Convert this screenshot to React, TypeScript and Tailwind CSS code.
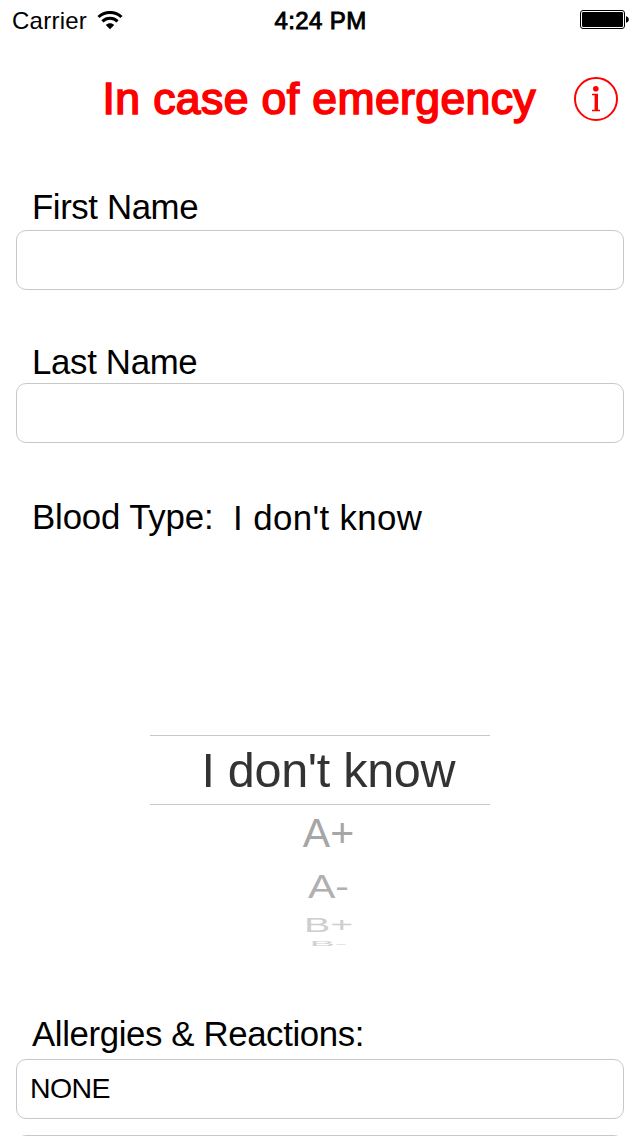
import { useState } from "react";

type FieldProps = {
  label: string;
  value: string;
  onChange: (value: string) => void;
  className: string;
  inputClassName: string;
};

function WifiIcon() {
  return (
    <svg width="26" height="20" viewBox="0 0 26 20" fill="none" stroke="black" strokeWidth="3">
      <path d="M1.5 6C8 -.1 18 -.1 24.5 6" />
      <path d="M5.4 10.4C9.8 6.3 16.2 6.3 20.6 10.4" />
      <path d="M8.8 14C11.3 11.6 14.7 11.6 17.2 14L13 18.2Z" fill="black" stroke="none" />
    </svg>
  );
}

function BatteryIcon() {
  return (
    <svg width="50" height="20" viewBox="0 0 50 20">
      <rect x="0.5" y="0.5" width="44" height="18" rx="2.5" fill="none" stroke="black" />
      <rect x="2" y="2" width="41" height="15" rx="1.2" fill="black" />
      <path d="M46 6.2C48 6.5 48.8 8 48.8 9.5C48.8 11 48 12.5 46 12.8Z" fill="black" />
    </svg>
  );
}

function InfoIcon() {
  return (
    <svg width="46" height="46" viewBox="0 0 46 46" fill="none" stroke="#ff0000">
      <circle cx="23" cy="23" r="21" strokeWidth="2" />
      <circle cx="22.8" cy="12.7" r="2.8" fill="#ff0000" stroke="none" />
      <path d="M19 18.5H25M19 34.5H27" strokeWidth="1.4" />
      <path d="M23.3 18V35" strokeWidth="3.4" />
    </svg>
  );
}

function StatusBar() {
  return (
    <div className="grid h-[42px] grid-cols-[1fr_auto_1fr] items-center pr-[11px] pl-3 text-[24px] leading-[42px]">
      <div className="flex items-center gap-[10px]">
        <span className="tracking-[0.25px]">Carrier</span>
        <WifiIcon />
      </div>
      <span className="tracking-[0.4px] [-webkit-text-stroke:0.9px_black]">4:24 PM</span>
      <div className="-mr-px flex justify-end pb-0.5">
        <BatteryIcon />
      </div>
    </div>
  );
}

function Field({ label, value, onChange, className, inputClassName }: FieldProps) {
  return (
    <label className={className}>
      <span className="block h-10 pl-4 text-[34.8px] leading-10">{label}</span>
      <input
        value={value}
        onChange={(e) => onChange(e.target.value)}
        className={`${inputClassName} block h-[60px] w-full rounded-[10px] border border-[#c8c8c8] bg-white px-[13px] pb-px text-[28.5px] tracking-[-0.6px] outline-none`}
      />
    </label>
  );
}

// Rows below the selection shrink and fade as they roll off the wheel
function BloodTypePicker({ selected }: { selected: string }) {
  return (
    <div className="mx-auto mt-[198px] w-[340px]">
      <div className="h-[70px] border-y border-[#c8c8c8] pl-[51.5px] text-[48.5px] leading-[69px] tracking-[-0.3px] whitespace-nowrap text-[#333333]">
        {selected}
      </div>
      <div className="flex h-[141px] flex-col items-center pl-[17px] text-[41px] text-[#a6a6a6]">
        <div className="h-[57px] leading-[57px]">A+</div>
        <div className="h-[50px] scale-y-[0.8] leading-[50px] text-[#b0b0b0]">A-</div>
        <div className="mt-px h-[24px] scale-x-[0.96] scale-y-[0.5] leading-[24px] text-[#cecece]">B+</div>
        <div className="-mt-[3px] h-[20px] scale-x-[0.92] scale-y-[0.16] leading-[20px] text-[#d2d2d2]">B-</div>
      </div>
    </div>
  );
}

export default function App() {
  const [firstName, setFirstName] = useState("");
  const [lastName, setLastName] = useState("");
  const [allergies, setAllergies] = useState("NONE");
  const [more, setMore] = useState("");
  const bloodType = "I don't know";

  return (
    <div className="h-[1136px] w-[640px] overflow-hidden bg-white font-['Liberation_Sans',Arial,sans-serif] text-black">
      <StatusBar />
      <header className="flex h-[114px] items-center justify-end gap-[37px] pr-[21px] text-[#ff0000]">
        <h1 className="text-[44.5px] leading-[60px] font-normal tracking-[0.4px] whitespace-nowrap [-webkit-text-stroke:1.7px_#ff0000]">In case of emergency</h1>
        <button aria-label="Info">
          <InfoIcon />
        </button>
      </header>
      <main className="px-4">
        <Field label="First Name" value={firstName} onChange={setFirstName} className="mt-[31px] block tracking-[-0.4px]" inputClassName="mt-[3px]" />
        <Field label="Last Name" value={lastName} onChange={setLastName} className="mt-[52px] block tracking-[-0.32px]" inputClassName="mt-px" />
        <div className="mt-[54px] flex h-10 pl-4 text-[34.8px] leading-10 whitespace-nowrap">
          <span className="w-[201px] tracking-[-0.15px]">Blood Type:</span>
          <span className="pt-px tracking-[0.4px]">{bloodType}</span>
        </div>
        <BloodTypePicker selected={bloodType} />
        <Field label="Allergies & Reactions:" value={allergies} onChange={setAllergies} className="mt-[68px] block tracking-[-0.38px]" inputClassName="mt-[5px]" />
        <input
          aria-label="More reactions"
          value={more}
          onChange={(e) => setMore(e.target.value)}
          className="mt-4 block h-[60px] w-full rounded-[10px] border border-[#c8c8c8] bg-white px-[13px] text-[28.5px] outline-none"
        />
      </main>
    </div>
  );
}
